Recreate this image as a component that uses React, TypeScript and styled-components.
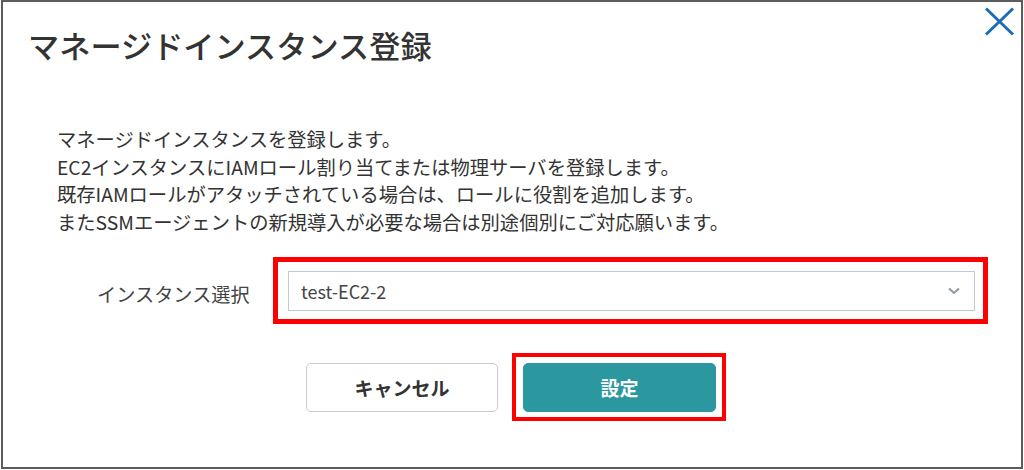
import React from "react";
import styled, { createGlobalStyle } from "styled-components";

const GlobalStyle = createGlobalStyle`
  html, body { margin: 0; padding: 0; background: #ffffff; }
  body { font-family: "Noto Sans CJK JP", "Noto Sans", sans-serif; color: #333333; }
  * { box-sizing: border-box; }
`;

const Frame = styled.div`
  width: 1022px;
  height: 469px;
  margin-left: 1px;
  border: 2px solid #5c5c5c;
  background: #ffffff;
  display: flex;
  flex-direction: column;
`;

const Header = styled.header`
  display: flex;
  justify-content: space-between;
  align-items: flex-start;
  padding: 5px 6px 0 25px;
`;

const Title = styled.h1`
  margin: 18px 0 0;
  font-size: 31.2px;
  line-height: 40px;
  font-weight: 500;
  color: #333333;
`;

const CloseButton = styled.button`
  width: 31px;
  height: 29px;
  padding: 0;
  border: none;
  background: transparent;
  display: flex;
  cursor: pointer;
`;

const Description = styled.div`
  margin-top: 61px;
  padding-left: 54px;
  font-size: 19.3px;
  line-height: 27.5px;
  color: #333333;
`;

const Line = styled.p`
  margin: 0;
  white-space: nowrap;
`;

const FormRow = styled.div`
  margin-top: 35px;
  padding-left: 94px;
  display: flex;
  align-items: center;
`;

const Label = styled.label`
  width: 191px;
  font-size: 19.2px;
  line-height: 28px;
  color: #444444;
  padding-top: 6px;
`;

const Annotated = styled.div`
  position: relative;
  display: flex;
`;

const Highlight = styled.div<{ $inset: string; $width: number }>`
  position: absolute;
  inset: ${(p) => p.$inset};
  border: ${(p) => p.$width}px solid #ff0000;
  pointer-events: none;
`;

const SelectBox = styled.div`
  width: 687px;
  height: 40px;
  border: 1.5px solid #c3c9d3;
  background: #ffffff;
  display: flex;
  align-items: center;
  justify-content: space-between;
  padding: 0 14px 0 12px;
  font-size: 18px;
  color: #444444;
`;

const ButtonRow = styled.div`
  margin-top: 52px;
  display: flex;
  justify-content: center;
  align-items: center;
  gap: 25px;
  padding-right: 2px;
`;

const Button = styled.button<{ $primary?: boolean; $width: number }>`
  width: ${(p) => p.$width}px;
  height: 49px;
  border-radius: 5px;
  font-family: inherit;
  font-size: 19px;
  font-weight: 700;
  cursor: pointer;
  border: ${(p) => (p.$primary ? "1.5px solid #2b98a0" : "1.5px solid #c5ccd6")};
  background: ${(p) => (p.$primary ? "#2b98a0" : "#ffffff")};
  color: ${(p) => (p.$primary ? "#ffffff" : "#333333")};
`;

export default function App() {
  return (
    <>
      <GlobalStyle />
      <Frame>
        <Header>
          <Title>マネージドインスタンス登録</Title>
          <CloseButton aria-label="close">
            <svg width="31" height="29" viewBox="0 0 31 29">
              <path d="M2 1.5 L29 27.5 M29 1.5 L2 27.5" stroke="#1c6db5" strokeWidth="3" fill="none" />
            </svg>
          </CloseButton>
        </Header>
        <Description>
          <Line>マネージドインスタンスを登録します。</Line>
          <Line>EC2インスタンスにIAMロール割り当てまたは物理サーバを登録します。</Line>
          <Line>既存IAMロールがアタッチされている場合は、ロールに役割を追加します。</Line>
          <Line>またSSMエージェントの新規導入が必要な場合は別途個別にご対応願います。</Line>
        </Description>
        <FormRow>
          <Label>インスタンス選択</Label>
          <Annotated>
            <SelectBox>
              <span>test-EC2-2</span>
              <svg width="12" height="8" viewBox="0 0 12 8">
                <path d="M1 1.5 L6 6 L11 1.5" stroke="#8d97a8" strokeWidth="2" fill="none" />
              </svg>
            </SelectBox>
            <Highlight $inset="-14px -13px -13px -15px" $width={5} />
          </Annotated>
        </FormRow>
        <ButtonRow>
          <Button $width={192}>キャンセル</Button>
          <Annotated>
            <Button $primary $width={193}>設定</Button>
            <Highlight $inset="-10px -10px -9px -11px" $width={4} />
          </Annotated>
        </ButtonRow>
      </Frame>
    </>
  );
}
